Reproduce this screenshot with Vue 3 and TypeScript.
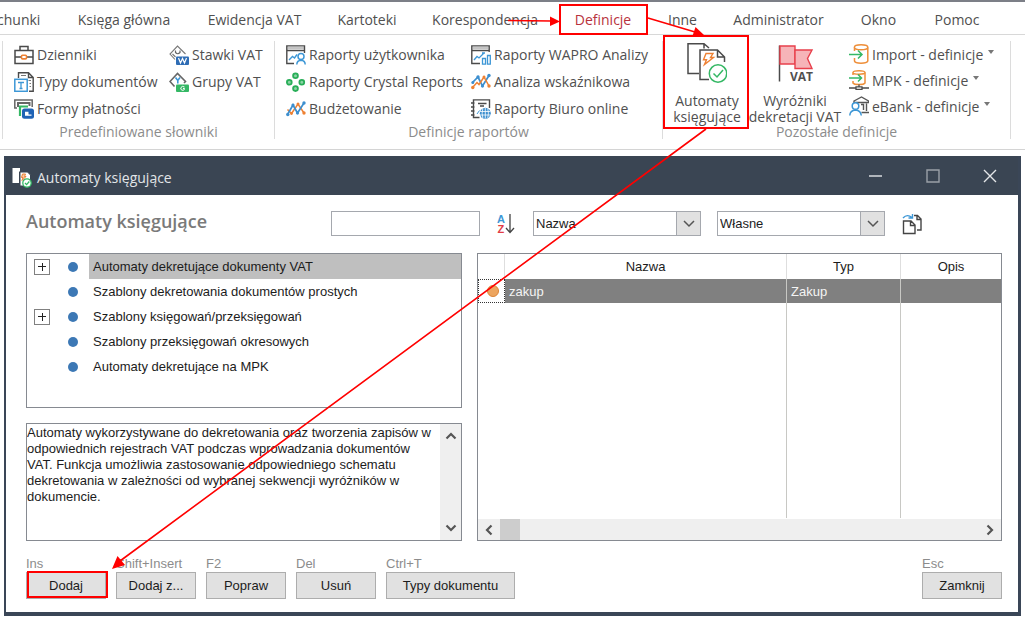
<script setup lang="ts">
import { ref } from 'vue'

interface RibbonItem {
  icon: string
  label: string
}

interface TreeItem {
  label: string
  expandable: boolean
}

interface Action {
  shortcut: string
  label: string
  wide?: boolean
}

const tabs: string[] = [
  'chunki',
  'Księga główna',
  'Ewidencja VAT',
  'Kartoteki',
  'Korespondencja',
  'Definicje',
  'Inne',
  'Administrator',
  'Okno',
  'Pomoc',
]
const activeTab = ref('Definicje')

const dictionaries: RibbonItem[] = [
  { icon: 'briefcase', label: 'Dzienniki' },
  { icon: 'doctype', label: 'Typy dokumentów' },
  { icon: 'payment', label: 'Formy płatności' },
  { icon: 'vatrate', label: 'Stawki VAT' },
  { icon: 'vatgroup', label: 'Grupy VAT' },
]

const reports: RibbonItem[] = [
  { icon: 'userreport', label: 'Raporty użytkownika' },
  { icon: 'crystal', label: 'Raporty Crystal Reports' },
  { icon: 'trend', label: 'Budżetowanie' },
  { icon: 'analysis', label: 'Raporty WAPRO Analizy' },
  { icon: 'trendalt', label: 'Analiza wskaźnikowa' },
  { icon: 'online', label: 'Raporty Biuro online' },
]

const others: RibbonItem[] = [
  { icon: 'import', label: 'Import - definicje' },
  { icon: 'mpk', label: 'MPK - definicje' },
  { icon: 'bank', label: 'eBank - definicje' },
]

const tree: TreeItem[] = [
  { label: 'Automaty dekretujące dokumenty VAT', expandable: true },
  { label: 'Szablony dekretowania dokumentów prostych', expandable: false },
  { label: 'Szablony księgowań/przeksięgowań', expandable: true },
  { label: 'Szablony przeksięgowań okresowych', expandable: false },
  { label: 'Automaty dekretujące na MPK', expandable: false },
]
const selected = ref(0)

const search = ref('')
const sortBy = ref('Nazwa')
const scope = ref('Własne')

const description = [
  'Automaty wykorzystywane do dekretowania oraz tworzenia zapisów w',
  'odpowiednich rejestrach VAT podczas wprowadzania dokumentów',
  'VAT. Funkcja umożliwia zastosowanie odpowiedniego schematu',
  'dekretowania w zależności od wybranej sekwencji wyróżników w',
  'dokumencie.',
].join('\n')

const actions: Action[] = [
  { shortcut: 'Ins', label: 'Dodaj' },
  { shortcut: 'Shift+Insert', label: 'Dodaj z...' },
  { shortcut: 'F2', label: 'Popraw' },
  { shortcut: 'Del', label: 'Usuń' },
  { shortcut: 'Ctrl+T', label: 'Typy dokumentu', wide: true },
]
</script>

<template>
  <div class="screen">
    <svg class="sprite" aria-hidden="true">
      <symbol id="i-briefcase" viewBox="0 0 20 20">
        <path d="M1 5.500H19V18.500H1ZM6 5V1.500H14V5M1 12H7.500M12.500 12H19" fill="none" stroke="#4a4a4a" stroke-width="1.500" />
        <rect x="7.500" y="10.300" width="5" height="3.600" rx="1" fill="#fff" stroke="#ee8133" stroke-width="1.600" />
      </symbol>
      <symbol id="i-doctype" viewBox="0 0 20 20">
        <path d="M4.500 6V.8H14.500L19.200 5.500V19.200H15M14.500 1V5.500H19" fill="none" stroke="#4a4a4a" stroke-width="1.400" />
        <path d="M7 3.500H12M14.500 8.500H17M15.500 11.500H17M15.500 14.500H17" stroke="#777" />
        <rect x=".8" y="7.300" width="12.400" height="12" fill="#fff" stroke="#3d97d6" stroke-width="1.500" />
        <path d="M4 10.500H10M7 10.500V16.500M5.500 16.500H8.500" stroke="#3d97d6" stroke-width="1.300" />
      </symbol>
      <symbol id="i-payment" viewBox="0 0 20 20">
        <path d="M3 9H.8V.9H18.200V8" fill="none" stroke="#666" stroke-width="1.500" />
        <path d="M4 8V4H15.500V7" fill="none" stroke="#666" stroke-width="2" />
        <path d="M6 17V7.500H14" fill="none" stroke="#35b865" stroke-width="2.200" />
        <rect x="8" y="9.500" width="12" height="10.300" rx="2.500" fill="#1f63b5" />
        <path d="M11 12.800H14.500V15.500H17.500V16.800H11Z" fill="#fff" />
      </symbol>
      <symbol id="i-vatrate" viewBox="0 0 20 20">
        <path d="M6 14.500L1 9 8.500 1 16.500 9M3.500 9L6.500 12" fill="none" stroke="#777" stroke-width="1.100" />
        <path d="M6.500 5.500V7.500Q8.700 10 11 7.500V5.500" fill="none" stroke="#666" stroke-width="1.200" />
        <rect x="7" y="11.500" width="13" height="8.500" rx="1" fill="#2f6db5" />
        <path d="M9.500 13L11.500 18 13.500 13.500 15.500 18 17.500 13" fill="none" stroke="#fff" stroke-width="1.200" />
      </symbol>
      <symbol id="i-vatgroup" viewBox="0 0 20 20">
        <path d="M5.500 14.500L1 9.500 8.500 1.500 16.500 9.500 15 11" fill="none" stroke="#666" stroke-width="1.600" />
        <path d="M6.500 5.500L8.800 8.500 11 5.500M8.800 8.500V11.500" fill="none" stroke="#3d97d6" stroke-width="1.600" />
        <rect x="7" y="12.500" width="13" height="7.500" rx="1" fill="#35b865" />
        <path d="M15.500 15Q13 13.500 12 15.500T13 18.200 15.500 17V16.500H14" fill="none" stroke="#fff" />
      </symbol>
      <symbol id="i-userreport" viewBox="0 0 20 20">
        <path d="M8 18.500H.8V.9H18.500V8M1 5.500H18" fill="none" stroke="#4a4a4a" stroke-width="1.400" />
        <path d="M1 3H18" stroke="#8a8a8a" />
        <path d="M3 15L6.500 11.500 8.500 13 11 9.500" fill="none" stroke="#3d97d6" stroke-width="1.400" />
        <circle cx="15" cy="11.500" r="3" fill="#fff" stroke="#3d97d6" stroke-width="1.500" />
        <path d="M10.800 19.500Q11 15.500 15 15.300 19 15.500 19.200 19.500" fill="none" stroke="#3d97d6" stroke-width="1.500" />
      </symbol>
      <symbol id="i-crystal" viewBox="0 0 20 20">
        <g fill="#8bd3a4" stroke="#28ae58" stroke-width="1.800">
          <circle cx="9.500" cy="3.800" r="2.400" /><circle cx="3.300" cy="10.300" r="2.400" />
          <circle cx="15.800" cy="10.300" r="2.400" /><circle cx="9.500" cy="16.600" r="2.400" />
        </g>
      </symbol>
      <symbol id="i-trend" viewBox="0 0 20 20">
        <path d="M1.500 10.500L5.500 14.500 12 5 18 14" fill="none" stroke="#ee8133" stroke-width="1.500" />
        <path d="M1.500 15.500L7 6 11.500 14 18 4" fill="none" stroke="#3d8fcf" stroke-width="1.700" />
        <g fill="#ee8133"><circle cx="12" cy="5" r="1.500" /><circle cx="18" cy="14" r="1.700" /><circle cx="5.500" cy="14.500" r="1.400" /></g>
        <g fill="#3d8fcf"><circle cx="1.800" cy="15.500" r="1.700" /><circle cx="7" cy="6" r="1.600" /><circle cx="11.500" cy="14" r="1.600" /><circle cx="18" cy="4" r="1.700" /></g>
      </symbol>
      <symbol id="i-trendalt" viewBox="0 0 20 20">
        <path d="M1.500 10.500L7 5 11.500 14 18 3.500" fill="none" stroke="#3d8fcf" stroke-width="1.700" />
        <path d="M1.500 15.500L6 10.500 8 12.500 13 5 18 14" fill="none" stroke="#ee8133" stroke-width="1.500" />
        <g fill="#3d8fcf"><circle cx="1.800" cy="10.500" r="1.500" /><circle cx="7" cy="5" r="1.700" /><circle cx="11.500" cy="14" r="1.600" /><circle cx="18" cy="3.500" r="1.700" /></g>
        <g fill="#ee8133"><circle cx="1.800" cy="15.500" r="1.700" /><circle cx="13" cy="5" r="1.500" /><circle cx="18" cy="14" r="1.700" /></g>
      </symbol>
      <symbol id="i-analysis" viewBox="0 0 20 20">
        <path d="M9 18.500H.8V.9H18.200V7M1 5.500H18" fill="none" stroke="#4a4a4a" stroke-width="1.400" />
        <path d="M1 3H18" stroke="#8a8a8a" />
        <path d="M3 15L6 11.500 8 13 12.500 8.500M11 8H14" fill="none" stroke="#3d97d6" stroke-width="1.300" />
        <path d="M11.500 13.500H14.500V19.200H11.500ZM16.500 10.500H19.300V19.200H16.500Z" fill="#fff" stroke="#3d97d6" stroke-width="1.300" />
      </symbol>
      <symbol id="i-online" viewBox="0 0 20 20">
        <path d="M8.500 18.500H2.500V.9H18.500V9M0 4H3.500M0 8H3.500M0 12H3.500M0 16H3.500M7 4.500H15.500M9 7H13" fill="none" stroke="#4a4a4a" stroke-width="1.400" />
        <path d="M6 15L8.500 11.500" stroke="#3d97d6" />
        <circle cx="14.300" cy="14.300" r="5.500" fill="#3d8fcf" />
        <path d="M9 12.500H19.500M9 16H19.500M14.300 9V19.500M11.800 9.500Q10.500 14.300 11.800 19M16.800 9.500Q18 14.300 16.800 19" fill="none" stroke="#fff" stroke-width=".8" />
      </symbol>
      <symbol id="i-import" viewBox="0 0 20 20">
        <path d="M5.500 7V3.500M5.500 14V17Q6 19.200 12 19.200T18.800 17V3.500" fill="none" stroke="#ee8f3a" stroke-width="1.500" />
        <ellipse cx="12.100" cy="3.300" rx="6.700" ry="2.500" fill="#fff" stroke="#ee8f3a" stroke-width="1.500" />
        <path d="M0 10.500H12.500M9 6.500L13 10.500 9 14.500" fill="none" stroke="#35b865" stroke-width="1.500" />
      </symbol>
      <symbol id="i-mpk" viewBox="0 0 20 20">
        <path d="M4 5V2.500M4 11V13Q5 14.500 10 14.500T16 13V2.500" fill="none" stroke="#ee8f3a" stroke-width="1.500" />
        <ellipse cx="10" cy="2.500" rx="6" ry="1.800" fill="#fff" stroke="#ee8f3a" stroke-width="1.400" />
        <path d="M0 8H12M9 4.500L12.500 8 9 11.500" fill="none" stroke="#35b865" stroke-width="1.500" />
        <path d="M10 14.500V17M0 18H7M13 18H20M7 16.800H13V19.300H7Z" fill="none" stroke="#4a4a4a" stroke-width="1.300" />
      </symbol>
      <symbol id="i-bank" viewBox="0 0 20 20">
        <path d="M5 5L12.500 1 19.500 5V6.500H5ZM17.500 7.500V15M12 8.500H14.500V14M12.500 16.500H20" fill="none" stroke="#555" stroke-width="1.400" />
        <circle cx="6.500" cy="10" r="3.300" fill="#fff" stroke="#3d97d6" stroke-width="1.500" />
        <path d="M.8 19.500Q1 14.500 6.500 14 11.800 14.500 12.300 19.500" fill="#fff" stroke="#3d97d6" stroke-width="1.500" />
      </symbol>
      <symbol id="i-automat" viewBox="0 0 40 40">
        <path d="M12 30.500H1V.8H17L22 5M17 1V5.500" fill="none" stroke="#4a4a4a" stroke-width="1.500" />
        <path d="M22 36.500H13V7H30.500L37.500 14V19M30.500 7.500V14H37" fill="none" stroke="#4a4a4a" stroke-width="1.500" />
        <path d="M19 10.500H26L23.500 14.500H26.500L17.500 21.500 19.500 16.800H16.500Z" fill="#fff" stroke="#ee8133" stroke-width="1.400" />
        <circle cx="31" cy="30.500" r="8.700" fill="#fff" stroke="#35b865" stroke-width="1.500" />
        <path d="M26.500 30.500L30 34 36 27" fill="none" stroke="#35b865" stroke-width="1.500" />
      </symbol>
      <symbol id="i-flag" viewBox="0 0 40 40">
        <path d="M4.500 2.500V38.500" stroke="#4a4a4a" stroke-width="1.500" />
        <path d="M5 3H20V21H5Z" fill="#f6b4b8" stroke="#e8404c" stroke-width="1.400" />
        <path d="M20 7H37L32.500 15.500 37 25.500H20Z" fill="#f6b4b8" stroke="#e8404c" stroke-width="1.400" />
      </symbol>
      <symbol id="i-window" viewBox="0 0 20 21">
        <path d="M.5 1H8V4.500H7V16H.5Z" fill="#fff" />
        <path d="M8 5H15.500L18.500 8V19H8Z" fill="#fff" stroke="#3a4452" />
        <path d="M10.500 7H13.500L12.500 9.500H14L10 13.500 11 10.500H9.500Z" fill="#f7c9a5" stroke="#ee8133" />
        <circle cx="15" cy="16" r="4.200" fill="#fff" stroke="#35b865" stroke-width="1.300" />
        <path d="M13 16L14.600 17.600 17.300 14.500" fill="none" stroke="#35b865" stroke-width="1.300" />
      </symbol>
    </svg>

    <nav class="tabs">
      <button
        v-for="tab in tabs"
        :key="tab"
        type="button"
        class="tab"
        :class="{ active: tab === activeTab }"
        @click="activeTab = tab"
      >{{ tab }}</button>
    </nav>

    <div class="ribbon">
      <section class="group group-dict">
        <div class="items">
          <button v-for="item in dictionaries" :key="item.label" type="button" class="item">
            <svg class="icon"><use :href="'#i-' + item.icon" /></svg>{{ item.label }}
          </button>
        </div>
        <h2>Predefiniowane słowniki</h2>
      </section>
      <section class="group group-reports">
        <div class="items">
          <button v-for="item in reports" :key="item.label" type="button" class="item">
            <svg class="icon"><use :href="'#i-' + item.icon" /></svg>{{ item.label }}
          </button>
        </div>
        <h2>Definicje raportów</h2>
      </section>
      <section class="group group-other">
        <div class="other-row">
          <button type="button" class="big">
            <svg class="big-icon"><use href="#i-automat" /></svg>
            <span>Automaty<br>księgujące</span>
          </button>
          <button type="button" class="big">
            <span class="flag"><svg class="big-icon"><use href="#i-flag" /></svg><b>VAT</b></span>
            <span>Wyróżniki<br>dekretacji VAT</span>
          </button>
          <div class="menu-items">
            <button v-for="item in others" :key="item.label" type="button" class="item">
              <svg class="icon"><use :href="'#i-' + item.icon" /></svg>{{ item.label }}
              <i class="caret"></i>
            </button>
          </div>
        </div>
        <h2>Pozostałe definicje</h2>
      </section>
    </div>

    <main class="window">
      <header class="titlebar">
        <svg class="title-icon"><use href="#i-window" /></svg>
        <span class="title">Automaty księgujące</span>
        <button type="button" class="win-btn" aria-label="Minimalizuj">
          <svg viewBox="0 0 14 14"><path d="M0 7H13" /></svg>
        </button>
        <button type="button" class="win-btn dim" aria-label="Maksymalizuj">
          <svg viewBox="0 0 14 14"><path d="M1 1H13V13H1Z" /></svg>
        </button>
        <button type="button" class="win-btn" aria-label="Zamknij okno">
          <svg viewBox="0 0 14 14"><path d="M1 1L13 13M13 1L1 13" /></svg>
        </button>
      </header>

      <div class="body">
        <div class="toolbar">
          <h1>Automaty księgujące</h1>
          <input v-model="search" class="search" type="text" aria-label="Szukaj">
          <button type="button" class="tool" aria-label="Sortuj">
            <span class="az"><span class="a">A</span><span class="z">Z</span></span>
            <svg class="down" viewBox="0 0 10 20"><path d="M5 0V18M1 14L5 18.500 9 14" /></svg>
          </button>
          <label class="combo">
            <select v-model="sortBy" aria-label="Sortowanie"><option>Nazwa</option><option>Typ</option></select>
            <span class="combo-btn"><svg viewBox="0 0 12 8"><path d="M1 1L6 6 11 1" /></svg></span>
          </label>
          <label class="combo">
            <select v-model="scope" aria-label="Zakres"><option>Własne</option><option>Wszystkie</option></select>
            <span class="combo-btn"><svg viewBox="0 0 12 8"><path d="M1 1L6 6 11 1" /></svg></span>
          </label>
          <button type="button" class="tool copy" aria-label="Kopiuj">
            <svg class="copy-icon" viewBox="0 0 20 22">
              <path d="M1.500 8H9L13 12V20.500H1.500ZM8.500 8V12.500H13" />
              <path d="M12 2.500H15.500L19 6V17H15M15 2.500V6.500H19" />
              <path class="blue" d="M1 5Q5 .5 10 4.500M10.500 1V5H6.500" />
            </svg>
          </button>
        </div>

        <div class="panels">
          <div class="left">
            <ul class="tree">
              <li v-for="(node, index) in tree" :key="node.label">
                <span class="branch">
                  <button v-if="node.expandable" type="button" class="expander" :aria-label="'Rozwiń: ' + node.label"></button>
                </span>
                <span class="bullet"></span>
                <button
                  type="button"
                  class="node"
                  :class="{ selected: index === selected }"
                  @click="selected = index"
                >{{ node.label }}</button>
              </li>
            </ul>
            <div class="desc">
              <textarea readonly aria-label="Opis automatu" :value="description"></textarea>
              <div class="vscroll">
                <svg viewBox="0 0 12 8"><path d="M1.500 6.500L6 2 10.500 6.500" /></svg>
                <svg viewBox="0 0 12 8"><path d="M1.500 1.500L6 6 10.500 1.500" /></svg>
              </div>
            </div>
          </div>

          <div class="right">
            <table>
              <colgroup><col class="c-mark"><col><col class="c-type"><col class="c-desc"></colgroup>
              <thead>
                <tr><th></th><th>Nazwa</th><th>Typ</th><th>Opis</th></tr>
              </thead>
              <tbody>
                <tr class="row"><td class="mark"><span></span></td><td>zakup</td><td>Zakup</td><td></td></tr>
                <tr class="rest"><td></td><td></td><td></td><td></td></tr>
              </tbody>
            </table>
            <div class="hscroll">
              <svg viewBox="0 0 8 12"><path d="M6.500 1.500L2 6 6.500 10.500" /></svg>
              <span class="thumb"></span>
              <svg viewBox="0 0 8 12"><path d="M1.500 1.500L6 6 1.500 10.500" /></svg>
            </div>
          </div>
        </div>

        <footer class="actions">
          <div v-for="action in actions" :key="action.label" class="action" :class="{ wide: action.wide }">
            <span>{{ action.shortcut }}</span>
            <button type="button">{{ action.label }}</button>
          </div>
          <div class="action last">
            <span>Esc</span>
            <button type="button">Zamknij</button>
          </div>
        </footer>
      </div>
    </main>

    <svg class="marks" width="1025" height="622" viewBox="0 0 1025 622" aria-hidden="true">
      <g fill="none" stroke="#ff0000" stroke-width="2">
        <rect x="560" y="5" width="87" height="29" />
        <rect x="664" y="36" width="84" height="92" />
        <rect x="28" y="572" width="79" height="25" />
        <path d="M508 20.500L551 21M648 18L695 32M706 129L120 561" stroke-width="1.600" />
      </g>
      <path d="M560 21.500L550 16.500V26ZM704 35L692.500 36 695.500 27ZM112 569L117.500 556 125 565Z" fill="#ff0000" />
    </svg>
  </div>
</template>

<style>
body {
  margin: 0;
  background: #fff;
}
</style>

<style scoped>
* {
  box-sizing: border-box;
}

.screen {
  position: relative;
  overflow: hidden;
  padding-bottom: 6px;
  font-family: 'Open Sans', 'Noto Sans', sans-serif;
  font-size: 14px;
  color: #505050;
}

button,
input,
select,
textarea {
  font: inherit;
  color: inherit;
  margin: 0;
}

button {
  padding: 0;
  border: 0;
  background: none;
  white-space: nowrap;
}

.sprite {
  position: absolute;
  width: 0;
  height: 0;
}

.tabs {
  display: grid;
  grid-template-columns: 59fr 130fr 131fr 94fr 142fr 94fr 65fr 127fr 73fr 84fr 26fr;
  height: 35px;
  padding-top: 2px;
  border-top: 2px solid #7c7f87;
  border-bottom: 1px solid #d8d8d8;
}

.tab:first-child {
  justify-self: start;
  margin-left: -3px;
}

.tab.active {
  color: #b8323c;
}

.ribbon {
  display: grid;
  grid-template-columns: 272fr 388fr 349fr;
  height: 115px;
  padding: 6px 14px 0 2px;
  border-bottom: 1px solid #d4d4d4;
}

.group {
  height: 98px;
  min-width: 0;
  border-left: 1px solid #dcdcdc;
}

.group h2 {
  margin: 0;
  text-align: center;
  font-size: 14px;
  font-weight: 400;
  line-height: 20px;
  color: #8c8c8c;
}

.group-other {
  border-right: 1px solid #dcdcdc;
}

.group-other h2 {
  line-height: 14px;
}

.items {
  display: grid;
  grid-auto-flow: column;
  grid-template-rows: repeat(3, 27px);
  grid-template-columns: 155px 1fr;
  padding-left: 11px;
}

.group-reports .items {
  grid-template-columns: 185px 1fr;
}

.item {
  display: flex;
  align-items: center;
  gap: 3px;
  text-align: left;
}

.icon {
  flex: none;
  width: 20px;
  height: 20px;
}

.other-row {
  display: flex;
  height: 84px;
}

.big {
  display: flex;
  flex-direction: column;
  align-items: center;
  justify-content: flex-end;
  gap: 10px;
  width: 88px;
  line-height: 16px;
}

.big-icon {
  display: block;
  width: 40px;
  height: 40px;
}

.flag {
  position: relative;
}

.flag b {
  position: absolute;
  right: 2px;
  bottom: 0;
  font-size: 12px;
  line-height: 12px;
}

.menu-items {
  display: grid;
  grid-template-rows: repeat(3, 26px);
  align-content: start;
  margin-left: 10px;
}

.caret {
  margin: 0 0 4px 2px;
  border: 3px solid transparent;
  border-top: 4px solid #777;
  border-bottom: 0;
}

.window {
  margin: 6px 4px 0;
  border: 2px solid #3a4657;
  border-width: 0 3px 4px 2px;
}

.titlebar {
  display: flex;
  align-items: center;
  height: 39px;
  padding: 4px 0 0 6px;
  background: #3a4553;
  color: #e2e5e8;
}

.title-icon {
  width: 20px;
  height: 21px;
}

.title {
  flex: 1;
  margin-left: 5px;
}

.win-btn {
  width: 57px;
  height: 35px;
}

.win-btn svg {
  width: 14px;
  height: 14px;
  fill: none;
  stroke: #e4e6e8;
  stroke-width: 1.4;
}

.win-btn.dim svg {
  stroke: #9aa0a8;
}

.body {
  padding: 16px 16px 13px 20px;
  font-family: 'Liberation Sans', Arial, sans-serif;
  font-size: 13px;
  color: #1c1c1c;
}

.toolbar {
  display: flex;
  align-items: center;
  height: 25px;
}

h1 {
  flex: 1;
  align-self: flex-start;
  margin: 0;
  font-family: 'Open Sans', 'Noto Sans', sans-serif;
  font-size: 18px;
  font-weight: 600;
  line-height: 20px;
  color: #7a7a7a;
}

.search {
  width: 149px;
  height: 25px;
  border: 1px solid #a5a8ae;
  background: #fff;
}

.tool {
  display: flex;
  align-items: center;
  width: 20px;
  margin: 0 16px 0 17px;
}

.tool.copy {
  margin: 0 80px 0 17px;
}

.az {
  display: grid;
  font-size: 11px;
  font-weight: 700;
  line-height: 10px;
}

.a {
  color: #3d97d6;
}

.z {
  color: #e23c46;
}

.down {
  width: 10px;
  height: 20px;
  fill: none;
  stroke: #444;
  stroke-width: 1.3;
}

.copy-icon {
  width: 20px;
  height: 22px;
  fill: none;
  stroke: #444;
  stroke-width: 1.4;
}

.copy-icon .blue {
  stroke: #3d97d6;
}

.combo {
  display: flex;
  width: 168px;
  height: 25px;
  border: 1px solid #a5a8ae;
}

.combo + .combo {
  margin-left: 16px;
}

.combo select {
  flex: 1;
  min-width: 0;
  padding: 0 2px;
  border: 0;
  appearance: none;
  background: #fff;
}

.combo-btn {
  display: grid;
  place-items: center;
  width: 24px;
  border-left: 1px solid #a5a8ae;
  background: #e1e1e1;
}

.combo-btn svg {
  width: 12px;
  height: 8px;
  fill: none;
  stroke: #555;
  stroke-width: 1.5;
}

.panels {
  display: flex;
  gap: 15px;
  margin-top: 17px;
}

.left {
  display: flex;
  flex: 437;
  flex-direction: column;
  gap: 15px;
  min-width: 0;
}

.right {
  display: flex;
  flex: 524;
  flex-direction: column;
  min-width: 0;
  border: 1px solid #868a91;
}

.tree {
  height: 155px;
  margin: 0;
  padding: 0;
  border: 1px solid #868a91;
  list-style: none;
}

.tree li {
  display: flex;
  align-items: center;
  height: 25px;
}

.branch {
  width: 41px;
  padding-left: 7px;
}

.expander {
  display: block;
  width: 16px;
  height: 16px;
  border: 1px solid #808080;
  background:
    linear-gradient(#222, #222) center / 8px 1px no-repeat,
    linear-gradient(#222, #222) center / 1px 8px no-repeat;
}

.bullet {
  width: 10px;
  height: 10px;
  margin-right: 11px;
  border-radius: 50%;
  background: #3c78b5;
}

.node {
  flex: 1;
  height: 25px;
  padding-left: 4px;
  text-align: left;
}

.node.selected {
  background: #bfbfbf;
}

.desc {
  display: flex;
  height: 118px;
  border: 1px solid #868a91;
}

.desc textarea {
  flex: 1;
  min-width: 0;
  padding: 1px 0 0;
  border: 0;
  outline: 0;
  overflow: hidden;
  resize: none;
  line-height: 16px;
  white-space: pre;
}

.vscroll {
  display: flex;
  flex-direction: column;
  align-items: center;
  justify-content: space-between;
  width: 21px;
  padding: 8px 0;
  background: #efefef;
}

.vscroll svg {
  width: 12px;
  height: 8px;
}

.vscroll svg,
.hscroll svg {
  fill: none;
  stroke: #555;
  stroke-width: 2.2;
}

table {
  width: 100%;
  border-collapse: separate;
  border-spacing: 0;
  table-layout: fixed;
}

.c-mark {
  width: 27px;
}

.c-type {
  width: 114px;
}

.c-desc {
  width: 100px;
}

th,
td {
  height: 25px;
  padding: 0 4px;
  border-right: 1px solid #c8c8c4;
  text-align: left;
  font-weight: 400;
}

th {
  text-align: center;
  border-color: #dedede;
}

th:last-child,
td:last-child {
  border-right: 0;
}

.row td {
  height: 24px;
  background: #808080;
  color: #f4f4f4;
}

.row .mark {
  padding: 0 0 0 8px;
  border: 1px dotted #333;
  background: #fff;
}

.mark span {
  display: block;
  width: 12px;
  height: 12px;
  border: 1px solid #dc8538;
  border-radius: 50%;
  background: #eda55f;
}

.rest td {
  height: 215px;
}

.rest td:first-child {
  border-color: transparent;
}

.hscroll {
  display: flex;
  align-items: center;
  height: 21px;
  margin-top: auto;
  padding: 0 7px;
  background: #efefef;
}

.hscroll svg {
  width: 8px;
  height: 12px;
}

.thumb {
  width: 20px;
  height: 21px;
  margin: 0 auto 0 7px;
  background: #cdcdcd;
}

.actions {
  display: flex;
  gap: 10px;
  margin-top: 15px;
}

.action {
  display: flex;
  flex-direction: column;
  width: 80px;
}

.action.wide {
  width: 129px;
}

.action.last {
  margin-left: auto;
}

.action span {
  line-height: 16px;
  white-space: nowrap;
  color: #8c8c8c;
}

.action button {
  height: 27px;
  border: 1px solid #adadad;
  background: #e1e1e1;
}

.marks {
  position: absolute;
  top: 0;
  left: 0;
  pointer-events: none;
}
</style>
